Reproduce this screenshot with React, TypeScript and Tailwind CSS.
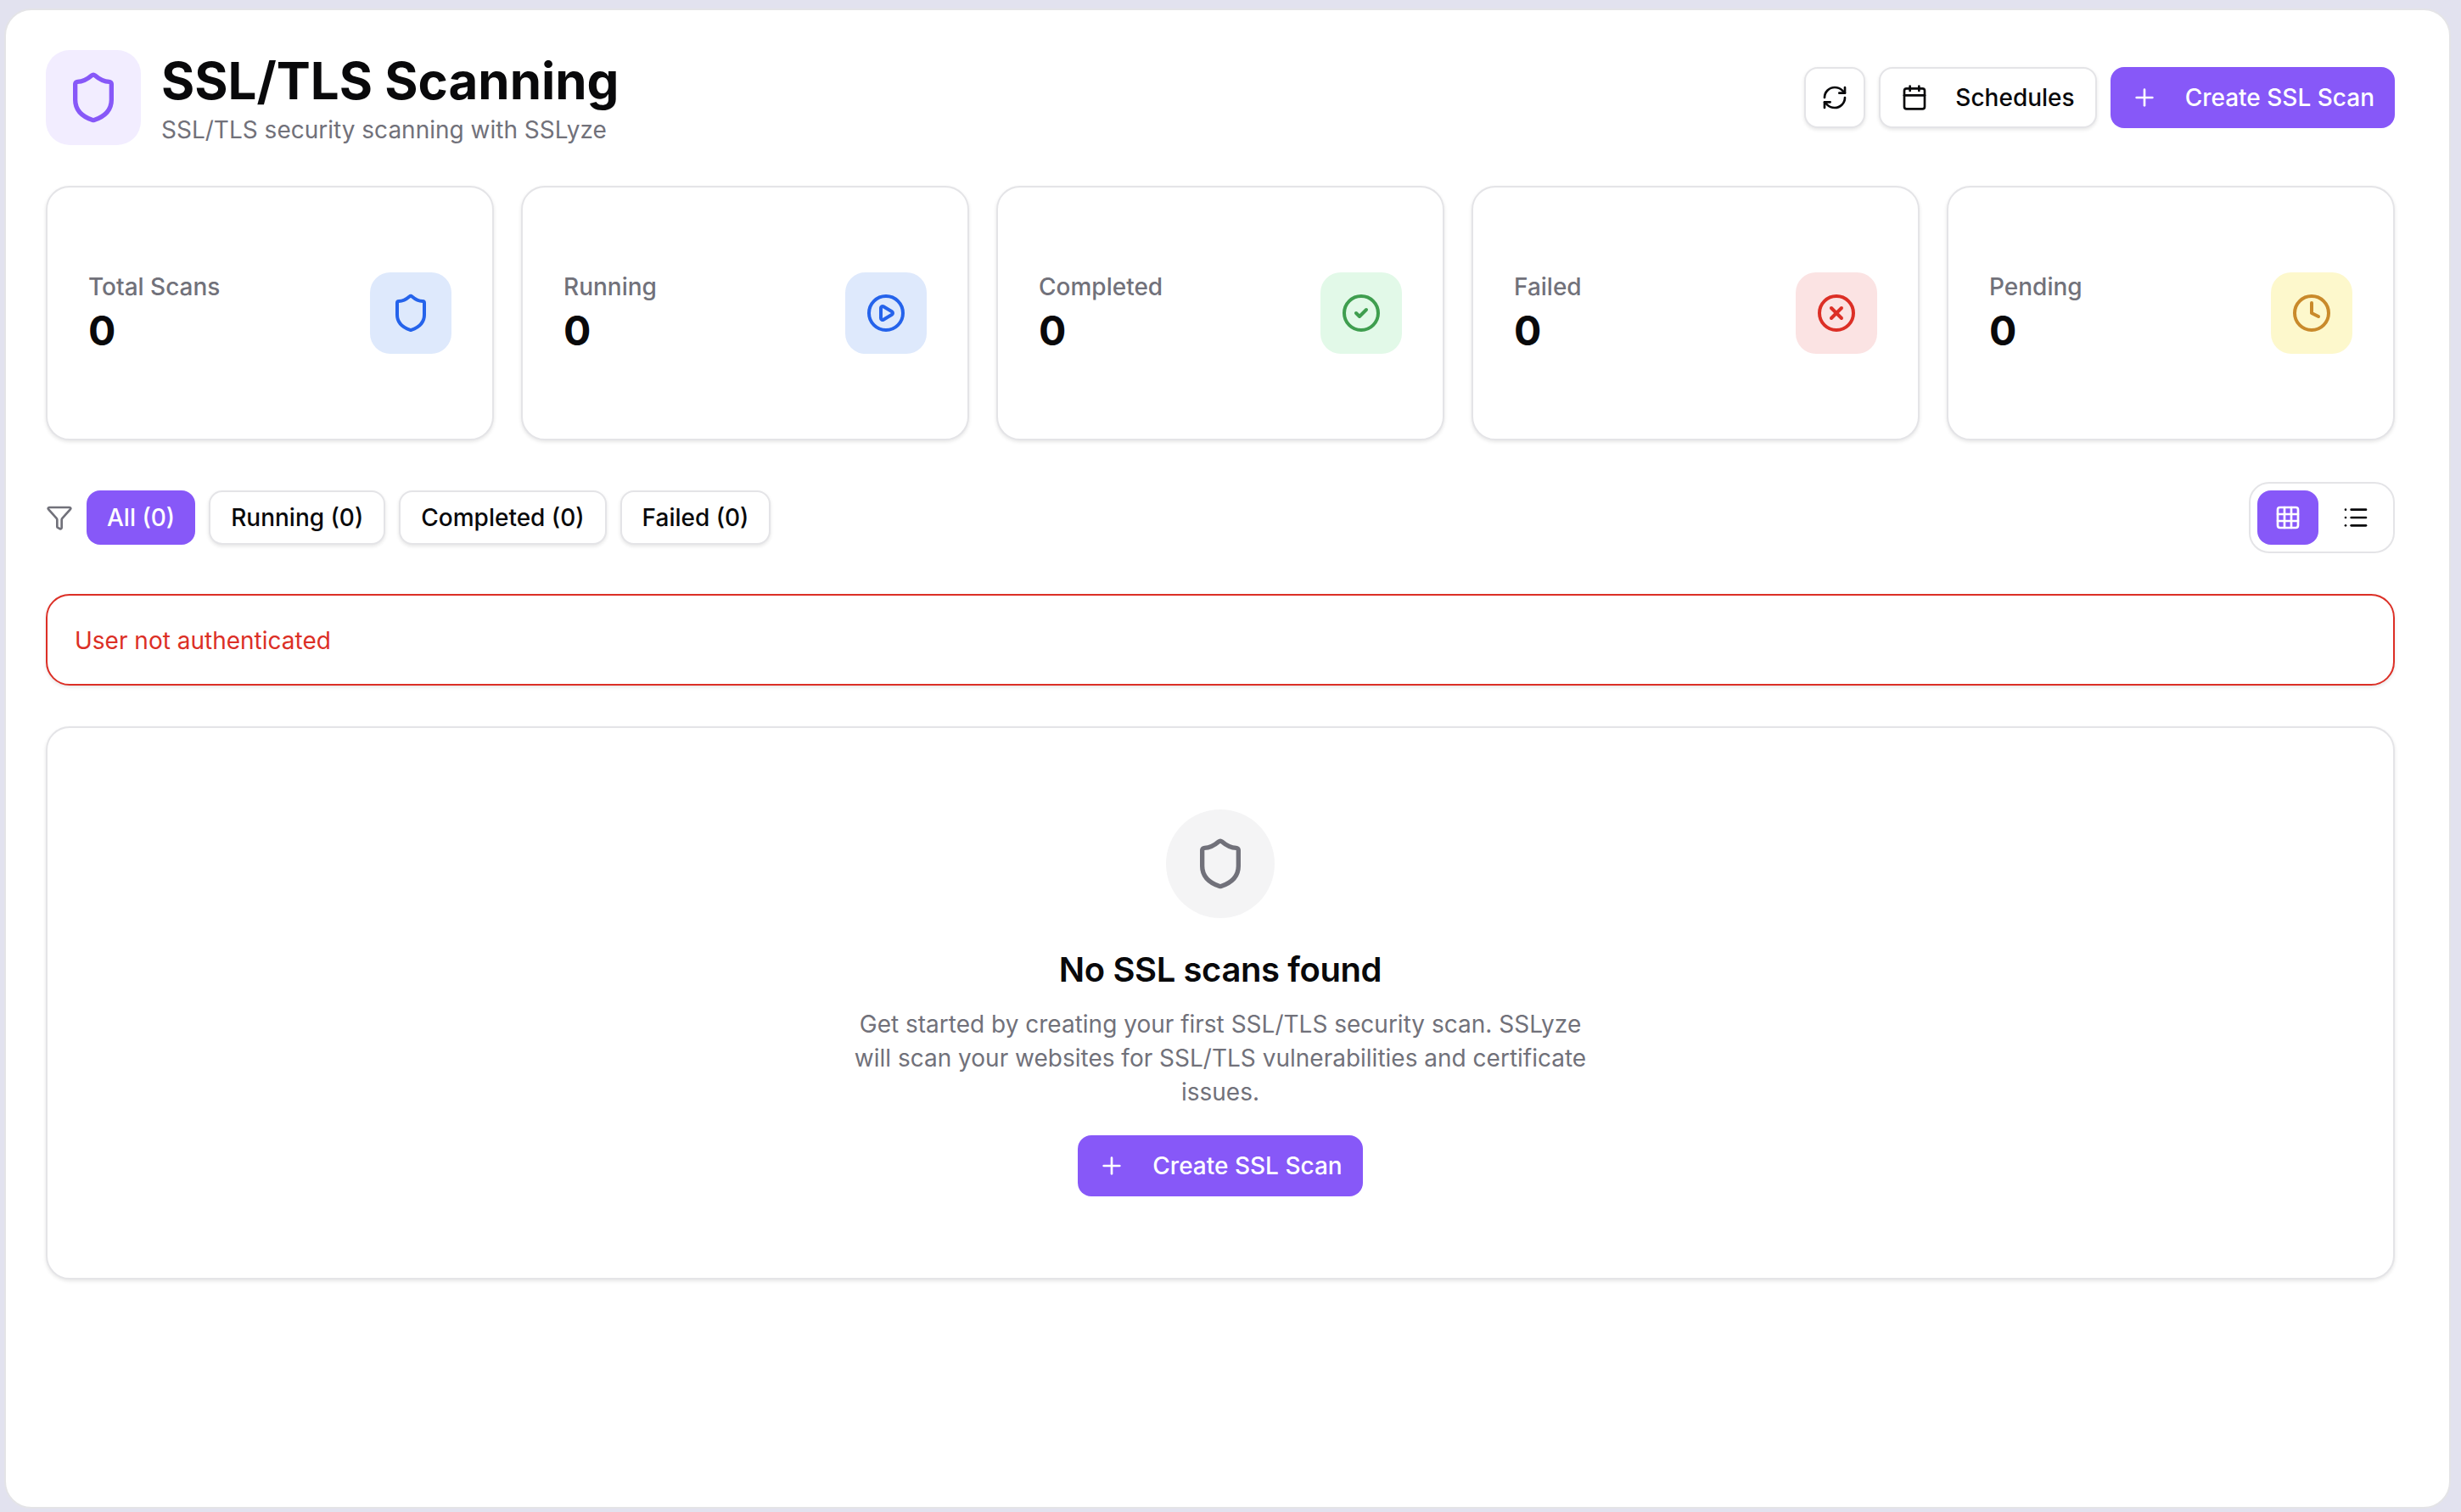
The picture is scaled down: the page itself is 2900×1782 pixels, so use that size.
import { Calendar, CircleCheck, CirclePlay, CircleX, Clock, Filter, Grid3x3, List, Plus, RefreshCw, Shield } from 'lucide-react';

const stats = [
  { label: 'Total Scans', icon: Shield, box: 'bg-[#dee9fc]', color: 'text-[#2563eb]' },
  { label: 'Running', icon: CirclePlay, box: 'bg-[#dee9fc]', color: 'text-[#2563eb]' },
  { label: 'Completed', icon: CircleCheck, box: 'bg-[#e2f9e8]', color: 'text-[#3f9e4f]' },
  { label: 'Failed', icon: CircleX, box: 'bg-[#fbe3e3]', color: 'text-[#dc2f26]' },
  { label: 'Pending', icon: Clock, box: 'bg-[#fdf8cc]', color: 'text-[#c98a2b]' },
];

const filters = ['Running (0)', 'Completed (0)', 'Failed (0)'];

const CreateButton = () => (
  <button className="flex h-[72px] items-center gap-[32px] rounded-[16px] bg-[#8758f8] px-[24px] text-[28px] font-medium text-white">
    <Plus size={32} strokeWidth={2} />
    Create SSL Scan
  </button>
);

const App = () => {
  return (
    <div className="flex h-[1782px] bg-[#e2e2ef] pt-[10px] pr-[12px] pb-[4px] pl-[5px] font-[Inter,sans-serif] text-[#09090b]">
      <div className="flex flex-1 flex-col gap-[48px] rounded-[32px] border-2 border-[#e4e4e7] bg-white pt-[47px] pr-[64px] pl-[47px]">
        <div className="flex items-center justify-between">
          <div className="flex items-center gap-[24px]">
            <div className="flex h-[112px] w-[112px] items-center justify-center rounded-[28px] bg-[#f2edff] text-[#8758f8]">
              <Shield size={64} strokeWidth={2} />
            </div>
            <div>
              <h1 className="text-[60px] leading-[72px] font-bold">SSL/TLS Scanning</h1>
              <p className="mt-[4px] text-[28px] leading-[36px] text-[#71717a]">SSL/TLS security scanning with SSLyze</p>
            </div>
          </div>
          <div className="flex items-center gap-[16px]">
            <button className="flex h-[72px] w-[72px] items-center justify-center rounded-[16px] border-2 border-[#e4e4e7] bg-white shadow-[0_2px_4px_rgba(0,0,0,0.1)]">
              <RefreshCw size={32} strokeWidth={2} />
            </button>
            <button className="flex h-[72px] items-center gap-[32px] rounded-[16px] border-2 border-[#e4e4e7] bg-white px-[24px] text-[28px] font-medium shadow-[0_2px_4px_rgba(0,0,0,0.1)]">
              <Calendar size={32} strokeWidth={2} />
              Schedules
            </button>
            <CreateButton />
          </div>
        </div>

        <div className="mb-[1px] grid grid-cols-5 gap-[32px]">
          {stats.map((stat) => (
            <div
              key={stat.label}
              className="flex h-[300px] items-center justify-between rounded-[28px] border-2 border-[#e4e4e7] bg-white px-[48px] shadow-[0_2px_4px_rgba(0,0,0,0.1)]"
            >
              <div className="pt-[2px]">
                <p className="text-[28px] leading-[40px] font-medium text-[#71717a]">{stat.label}</p>
                <p className="text-[48px] leading-[64px] font-bold">0</p>
              </div>
              <div className={`flex h-[96px] w-[96px] items-center justify-center rounded-[24px] ${stat.box} ${stat.color}`}>
                <stat.icon size={48} strokeWidth={2} />
              </div>
            </div>
          ))}
        </div>

        <div className="flex items-center justify-between">
          <div className="flex items-center gap-[16px]">
            <Filter size={32} strokeWidth={2} className="text-[#71717a]" />
            <button className="flex h-[64px] items-center rounded-[16px] bg-[#8758f8] px-[24px] text-[28px] font-medium text-white">All (0)</button>
            {filters.map((label) => (
              <button
                key={label}
                className="flex h-[64px] items-center rounded-[16px] border-2 border-[#e4e4e7] bg-white px-[24px] text-[28px] font-medium shadow-[0_2px_4px_rgba(0,0,0,0.1)]"
              >
                {label}
              </button>
            ))}
          </div>
          <div className="flex gap-[8px] rounded-[24px] border-2 border-[#e4e4e7] bg-white p-[8px]">
            <button className="flex h-[64px] w-[72px] items-center justify-center rounded-[16px] bg-[#8758f8] text-white">
              <Grid3x3 size={32} strokeWidth={2} />
            </button>
            <button className="flex h-[64px] w-[72px] items-center justify-center rounded-[16px]">
              <List size={32} strokeWidth={2} />
            </button>
          </div>
        </div>

        <div className="flex h-[108px] items-center rounded-[28px] border-2 border-[#dc2f26] bg-white px-[32px] pt-[2px] shadow-[0_2px_4px_rgba(0,0,0,0.1)]">
          <p className="text-[28px] leading-[40px] text-[#dc2f26]">User not authenticated</p>
        </div>

        <div className="flex flex-col items-center rounded-[28px] border-2 border-[#e4e4e7] bg-white py-[96px] shadow-[0_2px_4px_rgba(0,0,0,0.1)]">
          <div className="mb-[33px] flex h-[128px] w-[128px] items-center justify-center rounded-full bg-[#f4f4f5] text-[#71717a]">
            <Shield size={64} strokeWidth={2} />
          </div>
          <h3 className="mb-[16px] text-[40px] leading-[56px] font-semibold tracking-[-0.4px]">No SSL scans found</h3>
          <p className="mb-[31px] max-w-[896px] text-center text-[28px] leading-[40px] text-[#71717a]">
            Get started by creating your first SSL/TLS security scan. SSLyze will scan your websites for SSL/TLS vulnerabilities and certificate issues.
          </p>
          <CreateButton />
        </div>
      </div>
    </div>
  );
};

export default App;
